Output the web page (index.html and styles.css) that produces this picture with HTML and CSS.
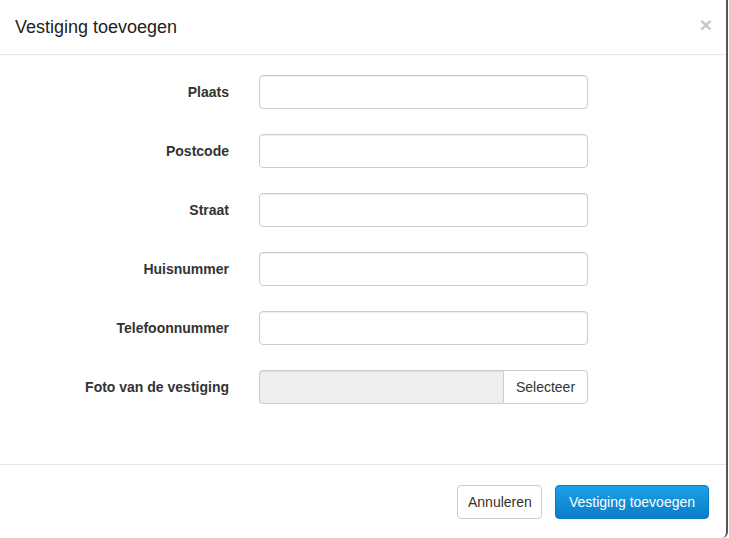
FILE: index.html
```html
<!DOCTYPE html>
<html>
<head>
<meta charset="utf-8">
<link rel="stylesheet" href="styles.css">
</head>
<body>
<div class="modal">
  <div class="modal-header">
    <h4 class="modal-title">Vestiging toevoegen</h4>
    <span class="close">×</span>
  </div>
  <div class="modal-body">
    <div class="form-group"><label class="label">Plaats</label><div class="input"></div></div>
    <div class="form-group"><label class="label">Postcode</label><div class="input"></div></div>
    <div class="form-group"><label class="label">Straat</label><div class="input"></div></div>
    <div class="form-group"><label class="label">Huisnummer</label><div class="input"></div></div>
    <div class="form-group"><label class="label">Telefoonnummer</label><div class="input"></div></div>
    <div class="form-group"><label class="label">Foto van de vestiging</label>
      <div class="file-group"><div class="file-field"></div><div class="file-btn">Selecteer</div></div>
    </div>
  </div>
  <div class="modal-footer">
    <button class="btn btn-default">Annuleren</button>
    <button class="btn btn-primary">Vestiging toevoegen</button>
  </div>
</div>
</body>
</html>
```
FILE: styles.css
```css
html, body {
  margin: 0;
  padding: 0;
  background: #ffffff;
  font-family: "Liberation Sans", Arial, sans-serif;
  color: #333;
}
.modal {
  width: 728px;
  height: 538px;
  background: #fff;
  border-right: 2px solid #555;
  border-radius: 0 0 6px 6px;
  box-sizing: border-box;
  display: flex;
  flex-direction: column;
}
.modal-header {
  height: 55px;
  flex: none;
  border-bottom: 1px solid #e5e5e5;
  display: flex;
  align-items: center;
  justify-content: space-between;
  padding: 0 14px 0 15px;
  box-sizing: border-box;
}
.modal-title {
  margin: 0;
  font-size: 18px;
  font-weight: normal;
  color: #222;
  padding-top: 1px;
}
.close {
  font-size: 21px;
  font-weight: bold;
  color: #c6c6c6;
  line-height: 1;
  margin-top: -5px;
}
.modal-body {
  padding: 20px 0 0 0;
  height: 410px;
  flex: none;
  box-sizing: border-box;
  border-bottom: 1px solid #e5e5e5;
}
.form-group {
  display: flex;
  align-items: center;
  height: 34px;
  margin-bottom: 25px;
}
.label {
  width: 229px;
  text-align: right;
  font-size: 14px;
  font-weight: bold;
  color: #333;
  box-sizing: border-box;
}
.input {
  margin-left: 30px;
  width: 329px;
  height: 34px;
  border: 1px solid #ccc;
  border-radius: 4px;
  box-sizing: border-box;
  box-shadow: inset 0 1px 1px rgba(0,0,0,0.075);
}
.file-group {
  margin-left: 30px;
  width: 329px;
  height: 34px;
  display: flex;
}
.file-field {
  flex: 1;
  background: #eee;
  border: 1px solid #ccc;
  border-right: none;
  border-radius: 4px 0 0 4px;
  box-shadow: inset 0 1px 1px rgba(0,0,0,0.075);
}
.file-btn {
  width: 85px;
  border: 1px solid #ccc;
  border-radius: 0 4px 4px 0;
  box-sizing: border-box;
  font-size: 14px;
  display: flex;
  align-items: center;
  justify-content: center;
  color: #333;
}
.modal-footer {
  display: flex;
  justify-content: flex-end;
  align-items: flex-start;
  padding: 20px 17px 0 0;
}
.btn {
  height: 34px;
  font-family: "Liberation Sans", Arial, sans-serif;
  font-size: 14px;
  border-radius: 4px;
  padding: 0 10px;
  box-sizing: border-box;
}
.btn-default {
  width: 85px;
  background: #fff;
  border: 1px solid #ccc;
  color: #333;
}
.btn-primary {
  width: 154px;
  margin-left: 13px;
  color: #fff;
  border: 1px solid #0a7cc6;
  background: linear-gradient(#1ba0e6, #0a7dc9);
}
```
